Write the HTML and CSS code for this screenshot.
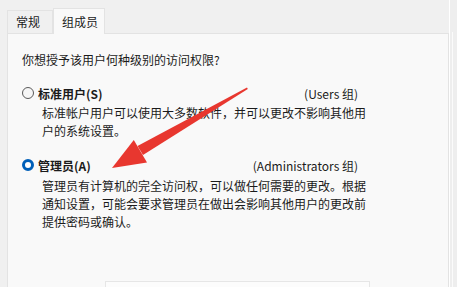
FILE: index.html
```html
<!DOCTYPE html>
<html lang="zh-CN">
<head>
<meta charset="utf-8">
<link rel="stylesheet" href="styles.css">
</head>
<body>
<div class="window">
  <div class="main">
    <div class="tabs">
      <div class="tab">常规</div>
      <div class="tab active">组成员</div>
    </div>
    <div class="panel">
      <p class="question">你想授予该用户何种级别的访问权限?</p>
      <div class="option">
        <div class="radio-row">
          <span class="radio-label"><span class="radio"></span>标准用户(S)</span>
          <span class="group">(Users 组)</span>
        </div>
        <p class="desc">标准帐户用户可以使用大多数软件，并可以更改不影响其他用<br>户的系统设置。</p>
      </div>
      <div class="option second">
        <div class="radio-row">
          <span class="radio-label"><span class="radio checked"></span>管理员(A)</span>
          <span class="group">(Administrators 组)</span>
        </div>
        <p class="desc desc-b">管理员有计算机的完全访问权，可以做任何需要的更改。根据<br>通知设置，可能会要求管理员在做出会影响其他用户的更改前<br>提供密码或确认。</p>
      </div>
      <div class="bottom-box"></div>
    </div>
  </div>
  <div class="edge"></div>
</div>
<svg class="arrow" width="457" height="287" viewBox="0 0 457 287">
  <polygon fill="#e8372f" points="247,87.6 247.8,89 143,155 137.5,146" />
  <polygon fill="#e8372f" points="112,168 133.8,140 147,162.4" />
</svg>
</body>
</html>
```

FILE: styles.css
```css
html, body {
  margin: 0;
  padding: 0;
}
body {
  width: 457px;
  height: 287px;
  overflow: hidden;
  background: #f0f0f0;
  font-family: "Microsoft YaHei", "Noto Sans CJK SC", "Noto Sans", sans-serif;
  font-size: 12px;
  color: #1b1b1b;
  position: relative;
}
.window {
  display: flex;
  height: 287px;
}
.main {
  flex: 1;
  padding: 8px 0 0 7px;
  display: flex;
  flex-direction: column;
}
.tabs {
  display: flex;
  align-items: flex-end;
  height: 25px;
}
.tab {
  box-sizing: border-box;
  height: 23px;
  width: 46px;
  padding-left: 8px;
  line-height: 22px;
  border: 1px solid #e3e3e3;
  border-bottom: none;
  background: #f0f0f0;
}
.tab.active {
  height: 26px;
  width: 52px;
  padding-left: 8px;
  line-height: 26px;
  background: #f9f9f9;
  margin-bottom: -1px;
  position: relative;
  z-index: 1;
}
.panel {
  flex: 1;
  background: #f9f9f9;
  border: 1px solid #e3e3e3;
  border-bottom: none;
  padding: 17px 0 0 14px;
}
.question {
  margin: 0;
  line-height: 18px;
}
.option {
  margin-top: 15px;
}
.option.second {
  margin-top: 16px;
}
.radio-row {
  width: 336px;
  display: flex;
  justify-content: space-between;
  align-items: center;
  height: 18px;
}
.radio-label {
  display: flex;
  align-items: center;
  font-weight: bold;
}
.radio {
  box-sizing: border-box;
  width: 12px;
  height: 12px;
  border-radius: 50%;
  border: 1px solid #5a5a5a;
  background: #f6f6f6;
  margin-right: 4px;
}
.radio.checked {
  border: 3.5px solid #005fb8;
  background: #ffffff;
}
.group {
  color: #1b1b1b;
}
.desc {
  margin: 2px 0 0 20px;
  line-height: 18px;
  white-space: nowrap;
}
.desc-b {
  margin-top: 3px;
}
.bottom-box {
  margin: 50px 0 0 83px;
  width: 263px;
  height: 10px;
  border: 1px solid #e6e6e6;
  background: #fcfcfc;
}
.edge {
  width: 8px;
  border-left: 1px solid #ffffff;
  box-sizing: border-box;
  background: #eeeeee;
  position: relative;
}
.edge::after {
  content: "";
  position: absolute;
  top: 32px;
  bottom: 0;
  left: 2px;
  width: 1px;
  background: #fbfbfb;
}
.arrow {
  position: absolute;
  left: 0;
  top: 0;
  pointer-events: none;
}
```
